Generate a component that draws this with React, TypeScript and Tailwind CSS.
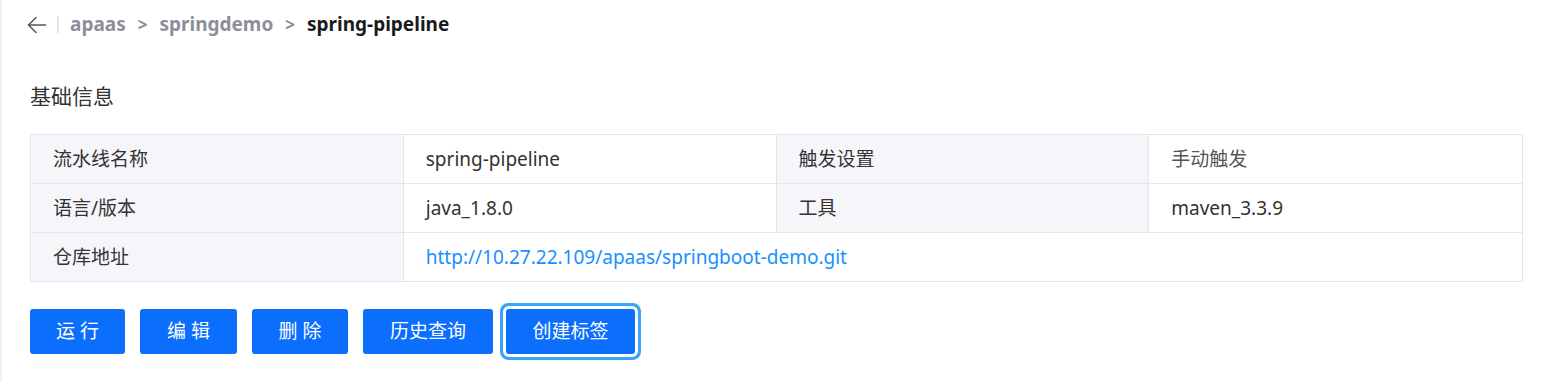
const font = { fontFamily: '"Segoe UI", "Noto Sans", "Noto Sans CJK SC", sans-serif' };

function BackArrow() {
  return (
    <svg width="20" height="20" viewBox="0 0 20 20" fill="none" stroke="#555" strokeWidth="1.5" strokeLinecap="round" strokeLinejoin="round">
      <path d="M1.5 10H18.5" />
      <path d="M9 2.5L1.5 10L9 17.5" />
    </svg>
  );
}

export default function App() {
  return (
    <div className="w-[1546px] h-[382px] bg-white border-l-2 border-[#f2f2f4] text-[#333]" style={font}>
      {/* breadcrumb */}
      <div className="flex items-center h-[48px] pl-[25px] pt-[1px]">
        <BackArrow />
        <div className="w-[2px] h-[17px] bg-[#e6e6ea] ml-[10px] mr-[11px]" />
        <span className="text-[19px] font-bold text-[#8e8e9a]">apaas</span>
        <span className="text-[17px] font-bold text-[#8e8e9a] mx-[12px]">&gt;</span>
        <span className="text-[19px] font-bold text-[#8e8e9a]">springdemo</span>
        <span className="text-[17px] font-bold text-[#8e8e9a] mx-[12px]">&gt;</span>
        <span className="text-[19px] font-bold text-[#1a1a1a]">spring-pipeline</span>
      </div>

      <div className="pl-[28px] pr-[23px]">
        <h3 className="text-[21px] text-[#333] mt-[32px] leading-[32px]">基础信息</h3>

        {/* info table */}
        <div className="mt-[22px] border border-[#e6e6ea] rounded-[2px] text-[19px]">
          <div className="grid grid-cols-4 h-[49px] border-b border-[#e6e6ea]">
            <div className="bg-[#f6f6fa] pl-[22px] flex items-center border-r border-[#e6e6ea]">流水线名称</div>
            <div className="pl-[22px] flex items-center border-r border-[#e6e6ea]">spring-pipeline</div>
            <div className="bg-[#f6f6fa] pl-[22px] flex items-center border-r border-[#e6e6ea]">触发设置</div>
            <div className="pl-[22px] flex items-center text-[#555]">手动触发</div>
          </div>
          <div className="grid grid-cols-4 h-[49px] border-b border-[#e6e6ea]">
            <div className="bg-[#f6f6fa] pl-[22px] flex items-center border-r border-[#e6e6ea]">语言/版本</div>
            <div className="pl-[22px] flex items-center border-r border-[#e6e6ea]">java_1.8.0</div>
            <div className="bg-[#f6f6fa] pl-[22px] flex items-center border-r border-[#e6e6ea]">工具</div>
            <div className="pl-[22px] flex items-center">maven_3.3.9</div>
          </div>
          <div className="grid grid-cols-4 h-[48px]">
            <div className="bg-[#f6f6fa] pl-[22px] flex items-center border-r border-[#e6e6ea]">仓库地址</div>
            <div className="col-span-3 pl-[22px] flex items-center text-[#1890ff]">http://10.27.22.109/apaas/springboot-demo.git</div>
          </div>
        </div>

        {/* actions */}
        <div className="flex items-center gap-[15px] mt-[27px]">
          <button className="w-[95px] h-[45px] rounded-[3px] bg-[#0b6efd] text-white text-[19px] tracking-[5px] pl-[5px]">运行</button>
          <button className="w-[97px] h-[45px] rounded-[3px] bg-[#0b6efd] text-white text-[19px] tracking-[5px] pl-[5px]">编辑</button>
          <button className="w-[96px] h-[45px] rounded-[3px] bg-[#0b6efd] text-white text-[19px] tracking-[5px] pl-[5px]">删除</button>
          <button className="w-[130px] h-[45px] rounded-[3px] bg-[#0b6efd] text-white text-[19px]">历史查询</button>
          <button className="ml-[-2px] w-[129px] h-[45px] rounded-[3px] bg-[#0b6efd] text-white text-[19px] ring-[3px] ring-[#36a3ff] ring-offset-[3px] outline-none">创建标签</button>
        </div>
      </div>
    </div>
  );
}
